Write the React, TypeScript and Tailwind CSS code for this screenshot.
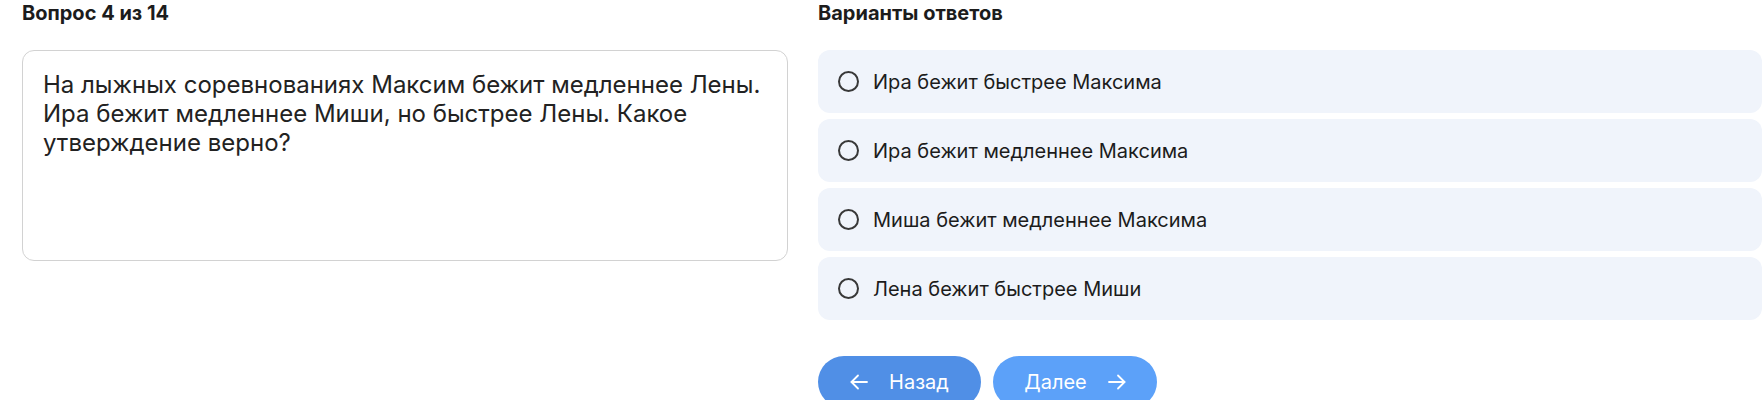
import { useState } from "react";

const options = [
  "Ира бежит быстрее Максима",
  "Ира бежит медленнее Максима",
  "Миша бежит медленнее Максима",
  "Лена бежит быстрее Миши",
];

export default function App() {
  const [selected, setSelected] = useState<number | null>(null);

  return (
    <div
      className="flex min-h-[400px] gap-[30px] bg-white pl-[22px] text-[#1c1c1c]"
      style={{ fontFamily: "Inter, 'Noto Sans', sans-serif" }}
    >
      <section className="w-[766px] shrink-0">
        <h2 className="h-[27px] text-[20px] leading-[27px] font-bold">Вопрос 4 из 14</h2>
        <div className="mt-[23px] h-[211px] rounded-[12px] border border-[#d2d2d2] px-5 py-[19px] text-[24px] leading-[29px] text-[#222]">
          На лыжных соревнованиях Максим бежит медленнее Лены. Ира бежит медленнее Миши, но быстрее Лены. Какое утверждение верно?
        </div>
      </section>

      <section className="flex-1">
        <h2 className="h-[27px] text-[20px] leading-[27px] font-bold">Варианты ответов</h2>
        <div className="mt-[23px] flex flex-col gap-[6px]">
          {options.map((text, i) => (
            <button
              key={text}
              type="button"
              onClick={() => setSelected(i)}
              className="flex h-[63px] items-center gap-[14px] rounded-[12px] bg-[#f0f4fb] pl-5 text-left text-[20px]"
            >
              <span className="flex h-[21px] w-[21px] items-center justify-center rounded-full border-2 border-[#383838]">
                {selected === i && <span className="h-2.5 w-2.5 rounded-full bg-[#383838]" />}
              </span>
              {text}
            </button>
          ))}
        </div>

        <div className="mt-9 flex gap-3">
          <button
            type="button"
            className="flex h-[52px] w-[163px] items-center justify-center gap-[21px] rounded-full bg-[#508fe6] text-[20px] text-white"
          >
            <Arrow dir="left" />
            Назад
          </button>
          <button
            type="button"
            className="flex h-[52px] w-[164px] items-center justify-center gap-[21px] rounded-full bg-[#5ca1f9] text-[20px] text-white"
          >
            Далее
            <Arrow dir="right" />
          </button>
        </div>
      </section>
    </div>
  );
}

function Arrow({ dir }: { dir: "left" | "right" }) {
  return (
    <svg width="18" height="18" viewBox="0 0 18 18" fill="none" stroke="currentColor" strokeWidth="1.8" strokeLinecap="round" strokeLinejoin="round">
      {dir === "left" ? (
        <>
          <path d="M17 9H1.5" />
          <path d="M8 2.5 1.5 9 8 15.5" />
        </>
      ) : (
        <>
          <path d="M1 9h15.5" />
          <path d="M10 2.5 16.5 9 10 15.5" />
        </>
      )}
    </svg>
  );
}
